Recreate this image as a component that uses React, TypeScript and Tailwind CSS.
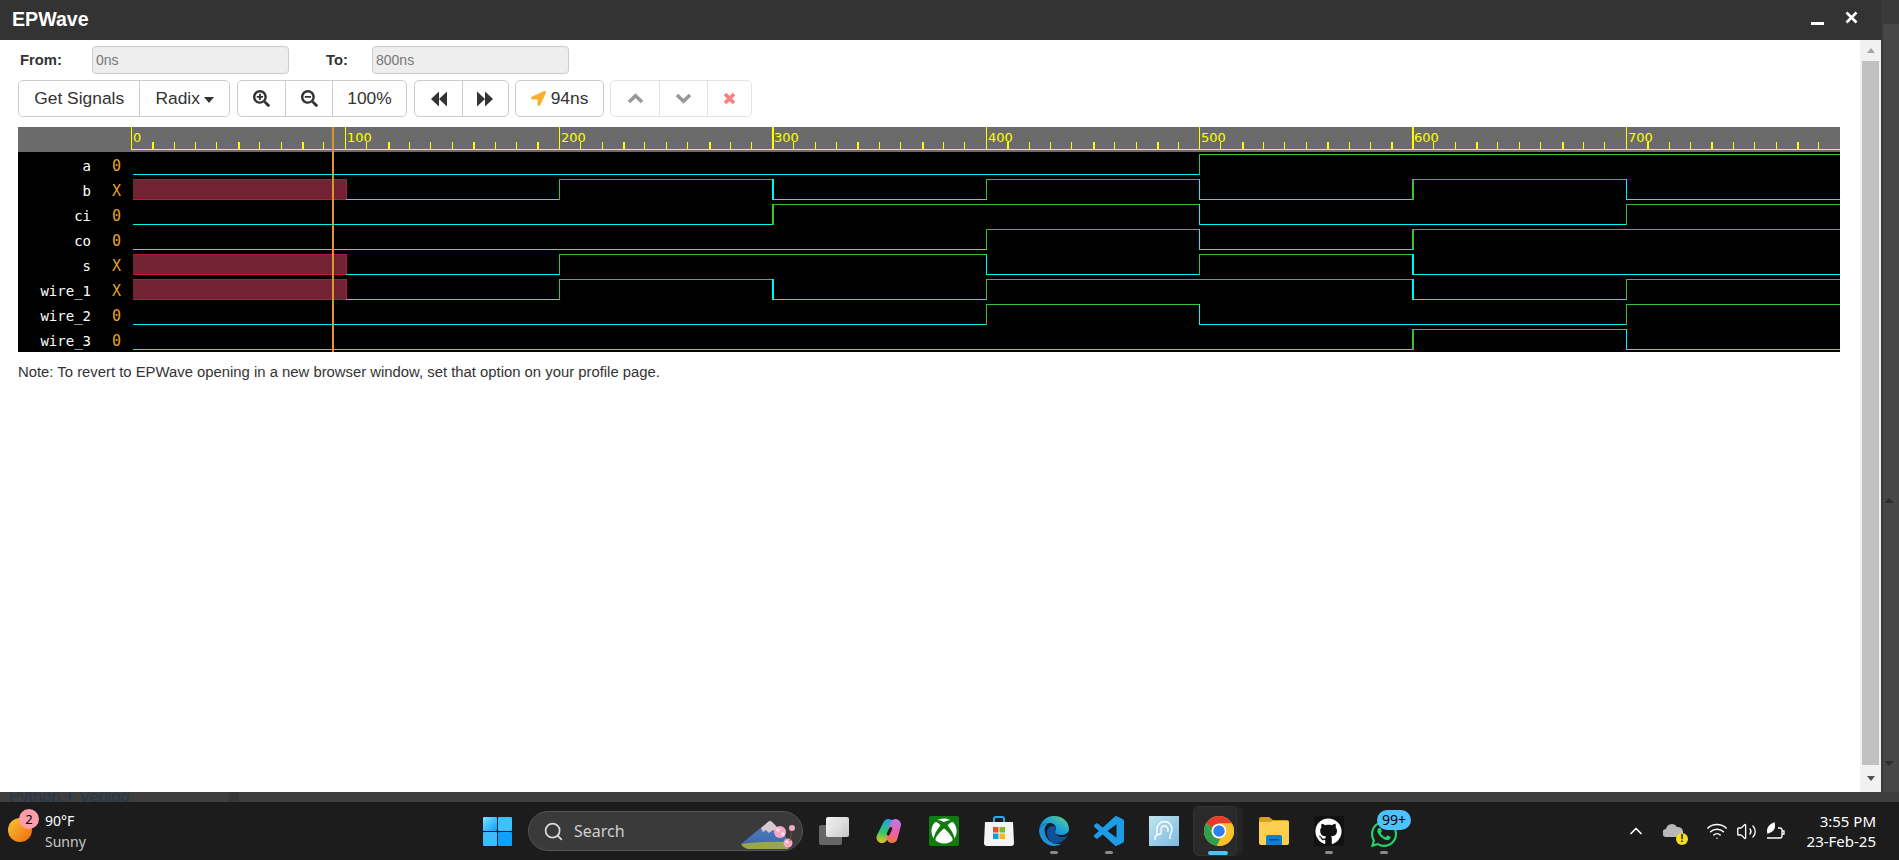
import React from "react";
import { FaSearchPlus, FaSearchMinus, FaLocationArrow, FaGithub, FaWhatsapp, FaXbox } from "react-icons/fa";
import { Search, ChevronUp, Wifi, Volume2 } from "lucide-react";

const major: Record<number, number> = { 0: 131, 100: 345, 200: 559, 300: 772, 400: 986, 500: 1199, 600: 1412, 700: 1626, 800: 1840 };
const thickMajor = [300, 600];
const thick = [10, 50, 80, 120, 160, 190, 230, 270, 340, 370, 410, 450, 480, 520, 560, 590, 630, 670, 710, 740, 780];
const OX = 131;
const OY = 127;

type Sig = { name: string; val: string; segs: [number, "0" | "1" | "x"][] };
const signals: Sig[] = [
  { name: "a", val: "0", segs: [[0, "0"], [500, "1"]] },
  { name: "b", val: "X", segs: [[0, "x"], [100, "0"], [200, "1"], [300, "0"], [400, "1"], [500, "0"], [600, "1"], [700, "0"]] },
  { name: "ci", val: "0", segs: [[0, "0"], [300, "1"], [500, "0"], [700, "1"]] },
  { name: "co", val: "0", segs: [[0, "0"], [400, "1"], [500, "0"], [600, "1"]] },
  { name: "s", val: "X", segs: [[0, "x"], [100, "0"], [200, "1"], [400, "0"], [500, "1"], [600, "0"]] },
  { name: "wire_1", val: "X", segs: [[0, "x"], [100, "0"], [200, "1"], [300, "0"], [400, "1"], [600, "0"], [700, "1"]] },
  { name: "wire_2", val: "0", segs: [[0, "0"], [400, "1"], [500, "0"], [700, "1"]] },
  { name: "wire_3", val: "0", segs: [[0, "0"], [600, "1"], [700, "0"]] },
];

const CYAN = "#00f6f6";
const GREEN = "#38c038";

function Ruler() {
  const ticks: React.ReactNode[] = [];
  for (let t = 0; t < 800; t += 10) {
    if (t % 100 === 0) continue;
    const base = major[Math.floor(t / 100) * 100];
    const x = base + Math.round((t % 100) * 2.136) - OX;
    ticks.push(<rect key={t} x={x} y={15} width={thick.includes(t) ? 2 : 1} height={7} fill="#ffff00" />);
  }
  return (
    <g shapeRendering="crispEdges">
      <rect x={0} y={0} width={1709} height={25} fill="#6b6b6b" />
      <rect x={0} y={22} width={1709} height={1} fill="#ffff00" />
      {ticks}
      {[0, 100, 200, 300, 400, 500, 600, 700].map((t) => (
        <rect key={t} x={major[t] - OX} y={0} width={thickMajor.includes(t) ? 2 : 1} height={22} fill="#ffff00" />
      ))}
    </g>
  );
}

function Wave({ sig, row }: { sig: Sig; row: number }) {
  const low = 174 + 25 * row - OY;
  const high = low - 20;
  const parts: React.ReactNode[] = [];
  sig.segs.forEach(([t, v], i) => {
    const next = i + 1 < sig.segs.length ? sig.segs[i + 1][0] : 800;
    const w = thickMajor.includes(t) ? 2 : 1;
    const xs = t === 0 ? 2 : major[t] - OX + w;
    const xe = major[next] - OX;
    if (v === "x") {
      const xr = 347 - OX;
      parts.push(<rect key={`f${i}`} x={2} y={high} width={xr - 2} height={21} fill="#722233" />);
      parts.push(<rect key={`t${i}`} x={2} y={high} width={xr - 2} height={1} fill="#a81e3e" />);
      parts.push(<rect key={`b${i}`} x={2} y={low} width={xr - 2} height={1} fill="#d0143c" />);
      parts.push(<rect key={`r${i}`} x={xr - 1} y={high} width={1} height={21} fill="#a81e3e" />);
    } else {
      parts.push(<rect key={`h${i}`} x={xs} y={v === "1" ? high : low} width={xe - xs} height={1} fill={v === "1" ? GREEN : CYAN} />);
    }
    if (t > 0 && !(sig.segs[i - 1][1] === "x")) {
      parts.push(<rect key={`v${i}`} x={major[t] - OX} y={high} width={w} height={21} fill={v === "1" ? GREEN : CYAN} />);
    }
  });
  return <g shapeRendering="crispEdges">{parts}</g>;
}

function WavePanel() {
  return (
    <div className="ml-[18px] mt-[10px] w-[1822px] h-[225px] flex bg-black">
      <div className="w-[113px] flex flex-col font-['DejaVu_Sans_Mono',monospace] text-[14px]">
        <div className="h-[25px] bg-[#6b6b6b]" />
        {signals.map((s) => (
          <div key={s.name} className="h-[25px] flex items-center pt-[3px]">
            <span className="w-[73px] text-right text-white">{s.name}</span>
            <span className="ml-[21px] text-[15px] text-[#e8a030]">{s.val}</span>
          </div>
        ))}
      </div>
      <svg width={1709} height={225} className="block">
        <Ruler />
        {[0, 100, 200, 300, 400, 500, 600, 700].map((t) => (
          <text key={t} x={major[t] - OX + 2} y={15} fill="#ffff00" fontFamily="'DejaVu Sans',sans-serif" fontSize={13}>
            {t}
          </text>
        ))}
        {signals.map((s, i) => (
          <Wave key={s.name} sig={s} row={i} />
        ))}
        <rect x={201} y={0} width={2} height={225} fill="#d9952f" shapeRendering="crispEdges" />
      </svg>
    </div>
  );
}

function Cell({ w, children, first }: { w: string; children: React.ReactNode; first?: boolean }) {
  return (
    <div className={`${w} h-full flex items-center justify-center ${first ? "" : "border-l border-[#ccc]"}`}>{children}</div>
  );
}

function Rewind({ flip }: { flip?: boolean }) {
  return (
    <svg width="16" height="16" viewBox="0 0 16 16" className={flip ? "-scale-x-100" : ""}>
      <polygon points="0,8 8,0.5 8,15.5" fill="#333" />
      <polygon points="8,8 16,0.5 16,15.5" fill="#333" />
    </svg>
  );
}

function Toolbar() {
  return (
    <div className="ml-[18px] mt-[6px] flex h-[37px] text-[17.4px] text-[#333]">
      <div className="w-[212px] flex border border-[#ccc] rounded-[5px]">
        <Cell w="w-[121px]" first>Get Signals</Cell>
        <Cell w="w-[90px]">
          <span>Radix</span>
          <span className="ml-[4px] mt-[2px] border-x-[5.5px] border-x-transparent border-t-[6px] border-t-[#333]" />
        </Cell>
      </div>
      <div className="ml-[7px] w-[170px] flex border border-[#ccc] rounded-[5px]">
        <Cell w="w-[47px]" first><FaSearchPlus size={17} /></Cell>
        <Cell w="w-[47px]"><FaSearchMinus size={17} /></Cell>
        <Cell w="w-[74px]">100%</Cell>
      </div>
      <div className="ml-[7px] w-[95px] flex border border-[#ccc] rounded-[5px]">
        <Cell w="w-[47px]" first><Rewind /></Cell>
        <Cell w="w-[46px]"><span className="-ml-[1px]"><Rewind flip /></span></Cell>
      </div>
      <div className="ml-[6px] w-[89px] flex items-center justify-center border border-[#ccc] rounded-[5px]">
        <FaLocationArrow size={15} className="text-[#fbb02d] mr-[5px]" />
        <span>94ns</span>
      </div>
      <div className="ml-[6px] w-[142px] flex border border-[#e4e4e4] rounded-[5px]">
        <div className="w-[48px] h-full flex items-center justify-center">
          <svg width="17" height="11" viewBox="0 0 17 11"><path d="M2 9 8.500 2.800 15 9" fill="none" stroke="#999" strokeWidth="3.6" /></svg>
        </div>
        <div className="w-[48px] h-full flex items-center justify-center border-l border-[#e4e4e4]">
          <svg width="17" height="11" viewBox="0 0 17 11"><path d="M2 2 8.500 8.200 15 2" fill="none" stroke="#999" strokeWidth="3.6" /></svg>
        </div>
        <div className="w-[44px] h-full flex items-center justify-center border-l border-[#e4e4e4]">
          <svg width="13" height="13" viewBox="0 0 13 13"><path d="M2 2 11 11M11 2 2 11" fill="none" stroke="#ff8080" strokeWidth="3.8" /></svg>
        </div>
      </div>
    </div>
  );
}

function FormRow() {
  const input = "h-[28px] w-[197px] bg-[#eee] border border-[#ccc] rounded-[4px] pl-[3px] flex items-center text-[14px] text-[#777]";
  return (
    <div className="flex items-center h-[28px] mt-[6px] text-[#333]">
      <span className="ml-[20px] w-[72px] font-bold text-[14.8px]">From:</span>
      <div className={input}>0ns</div>
      <span className="ml-[37px] w-[46px] font-bold text-[14.8px]">To:</span>
      <div className={input}>800ns</div>
    </div>
  );
}

function Scrollbar() {
  return (
    <div className="w-[21px] h-full bg-[#f1f1f1] flex flex-col items-center">
      <div className="h-[21px] flex items-center justify-center">
        <span className="border-x-[4.5px] border-x-transparent border-b-[5px] border-b-[#a3a3a3]" />
      </div>
      <div className="w-[17px] h-[704px] bg-[#c1c1c1]" />
      <div className="flex-1 flex items-center justify-center">
        <span className="border-x-[4.5px] border-x-transparent border-t-[5px] border-t-[#505050]" />
      </div>
    </div>
  );
}

function Window() {
  return (
    <div className="w-[1881px] h-full flex flex-col font-['Liberation_Sans',Arial,sans-serif]">
      <div className="h-[40px] bg-[#333] flex items-center text-white">
        <span className="ml-[12px] font-bold text-[19.6px] leading-none">EPWave</span>
        <div className="ml-auto mr-[23px] flex items-center">
          <span className="mt-[6px] w-[13px] h-[3px] bg-white" />
          <svg width="13" height="13" viewBox="0 0 13 13" className="ml-[21px] mb-[6px]">
            <path d="M1.5 1.5 11.5 11.5M11.5 1.5 1.5 11.5" stroke="#fff" strokeWidth="2.6" />
          </svg>
        </div>
      </div>
      <div className="flex-1 flex min-h-0 bg-white">
        <div className="flex-1">
          <FormRow />
          <Toolbar />
          <WavePanel />
          <p className="ml-[18px] mt-[12px] text-[14.85px] leading-[16px] text-[#333]">
            Note: To revert to EPWave opening in a new browser window, set that option on your profile page.
          </p>
        </div>
        <Scrollbar />
      </div>
    </div>
  );
}

function WinLogo() {
  return (
    <svg width="29" height="29" viewBox="0 0 29 29">
      <defs>
        <linearGradient id="wg" x1="0" y1="0" x2="1" y2="1">
          <stop offset="0" stopColor="#7fe4ff" />
          <stop offset="1" stopColor="#0f9bff" />
        </linearGradient>
      </defs>
      <rect x="0" y="0" width="14" height="14" rx="1" fill="url(#wg)" />
      <rect x="15" y="0" width="14" height="14" rx="1" fill="#3cc0ff" />
      <rect x="0" y="15" width="14" height="14" rx="1" fill="#3cbcff" />
      <rect x="15" y="15" width="14" height="14" rx="1" fill="#12a0ff" />
    </svg>
  );
}

function Mountain() {
  return (
    <svg width="56" height="30" viewBox="0 0 56 30">
      <defs>
        <linearGradient id="mg" x1="0" y1="0" x2="0" y2="1">
          <stop offset="0" stopColor="#5a7fc0" />
          <stop offset="1" stopColor="#3e6ab0" />
        </linearGradient>
      </defs>
      <path d="M1 25 28 3q2-2 4 0l14 14v8Z" fill="url(#mg)" />
      <path d="M21 9 28 3q2-2 4 0l8 8-4 2-3-2-4 3-3-3-3 2Z" fill="#d9c8cc" />
      <path d="M1 25q20-3 50-2l-3 7H8Q3 29 1 25Z" fill="#9aa84a" />
      <g fill="#f8a8c4">
        <circle cx="40" cy="13" r="6" />
        <circle cx="48" cy="24" r="4.5" />
        <circle cx="52" cy="9" r="3" />
      </g>
      <g fill="#fde2ec">
        <circle cx="38" cy="11" r="1.8" />
        <circle cx="43" cy="15" r="1.8" />
        <circle cx="47" cy="23" r="1.4" />
      </g>
      <path d="M52 12 50 22" stroke="#7a4a3a" strokeWidth="1" />
    </svg>
  );
}

function TaskView() {
  return (
    <div className="relative w-[30px] h-[28px]">
      <div className="absolute left-0 bottom-0 w-[23px] h-[20px] rounded-[2px] bg-[#666]" />
      <div className="absolute right-0 top-0 w-[23px] h-[20px] rounded-[2px] bg-gradient-to-br from-white to-[#cfcfcf] opacity-95" />
    </div>
  );
}

function Copilot() {
  return (
    <svg width="28" height="28" viewBox="0 0 28 28" fill="none" strokeLinecap="round">
      <defs>
        <linearGradient id="c1" gradientUnits="userSpaceOnUse" x1="12" y1="1" x2="8" y2="27">
          <stop offset="0" stopColor="#1c9ff5" />
          <stop offset=".55" stopColor="#35c46e" />
          <stop offset="1" stopColor="#f2c515" />
        </linearGradient>
        <linearGradient id="c2" gradientUnits="userSpaceOnUse" x1="22" y1="1" x2="14" y2="27">
          <stop offset="0" stopColor="#b57cf0" />
          <stop offset=".55" stopColor="#ec5fa6" />
          <stop offset="1" stopColor="#f87b2a" />
        </linearGradient>
      </defs>
      <path d="M13.500 7.500 7 20.500" stroke="url(#c1)" strokeWidth="11" />
      <path d="M20.500 7.500 17 20.500" stroke="url(#c2)" strokeWidth="11" />
      <path d="M15.800 11.500 13.200 17" stroke="#1c1c1c" strokeWidth="3" />
    </svg>
  );
}

function Store() {
  return (
    <svg width="30" height="30" viewBox="0 0 30 30">
      <path d="M10 7V3q0-2 2-2h6q2 0 2 2v4" fill="none" stroke="#29a8ea" strokeWidth="2" />
      <path d="M1 6h28l1 21q0 3-3 3H3q-3 0-3-3Z" fill="#f4f4f4" />
      <rect x="9" y="11" width="5.5" height="5.5" fill="#e8502a" />
      <rect x="15.5" y="11" width="5.5" height="5.5" fill="#7fba26" />
      <rect x="9" y="17.5" width="5.5" height="5.5" fill="#0fa0e8" />
      <rect x="15.5" y="17.5" width="5.5" height="5.5" fill="#fdb813" />
    </svg>
  );
}

function Edge() {
  return (
    <svg width="30" height="30" viewBox="0 0 30 30">
      <defs>
        <linearGradient id="e1" x1="0" y1="1" x2="1" y2="0">
          <stop offset="0" stopColor="#0c6bc0" />
          <stop offset=".55" stopColor="#1fa6d8" />
          <stop offset="1" stopColor="#6edb6a" />
        </linearGradient>
      </defs>
      <path d="M15 0c9 0 15 6 15 13 0 4-4 6-8 6-4 0-6-1-6-3 0-1 1-2 1-4 0-3-3-5-7-5-5 0-9 4-10 7C1 6 7 0 15 0Z" fill="url(#e1)" />
      <path d="M0 14c1-3 5-7 10-7-4 2-5 6-4 10 1 6 6 11 14 11 2 0 3 0 4-1-3 2-6 3-9 3C7 30 0 23 0 14Z" fill="#1f8fd8" />
      <path d="M8 16c0-3 2-6 6-6 2 0 3 1 3 2 0 1-1 2-1 4 0 3 4 5 8 5 2 0 4-1 5-2-2 4-6 8-11 8-6 1-10-5-10-11Z" fill="#0e4f9a" />
    </svg>
  );
}

function VSCode() {
  return (
    <svg width="30" height="30" viewBox="0 0 24 24">
      <path
        d="M23.15 2.587L18.21.21a1.494 1.494 0 0 0-1.705.29l-9.46 8.63-4.12-3.128a.999.999 0 0 0-1.276.057L.327 7.261A1 1 0 0 0 .326 8.74L3.899 12 .326 15.26a1 1 0 0 0 .001 1.479L1.65 17.94a.999.999 0 0 0 1.276.057l4.12-3.128 9.46 8.63a1.492 1.492 0 0 0 1.704.29l4.942-2.377A1.5 1.5 0 0 0 24 20.06V3.939a1.5 1.5 0 0 0-.85-1.352zm-5.146 14.861L10.826 12l7.178-5.448v10.896z"
        fill="#1f9ce8"
      />
    </svg>
  );
}

function HeadTile() {
  return (
    <div className="w-[30px] h-[30px] bg-gradient-to-br from-[#bfe6ee] to-[#7fb8e0] flex items-center justify-center">
      <svg width="22" height="22" viewBox="0 0 22 22" fill="none" stroke="#fff" strokeWidth="1.3">
        <path d="M4 14V9a7.5 7.5 0 0 1 15 0c0 4-2 5-2 7v3" />
        <path d="M8 14V9.5a3.5 3.5 0 0 1 7 0V12" />
        <path d="M8 14c-2 0-5 1-6 3v3" />
      </svg>
    </div>
  );
}

function Chrome() {
  const p = "M1.61 6A12 12 0 0 1 22.39 6H12A6 6 0 0 0 6.8 9Z";
  return (
    <svg width="30" height="30" viewBox="0 0 24 24">
      <circle cx="12" cy="12" r="12" fill="#fbc02d" />
      <path d="M1.61 6 6.8 15A6 6 0 0 0 13 18L10.2 23.9A12 12 0 0 1 1.61 6Z" fill="#2e9e4f" />
      <path d={p} fill="#e53a2f" />
      <path d="M22.39 6A12 12 0 0 1 10.4 23.9L15.5 15A6 6 0 0 0 12 6Z" fill="#fbc02d" />
      <path d="M1.61 6 6.8 15A6 6 0 0 1 6.8 9Z" fill="#2e9e4f" />
      <circle cx="12" cy="12" r="5.8" fill="#fff" />
      <circle cx="12" cy="12" r="4.6" fill="#2f7ff0" />
    </svg>
  );
}

function Folder() {
  return (
    <svg width="30" height="28" viewBox="0 0 30 28">
      <path d="M0 2q0-2 2-2h8l4 3h14q2 0 2 2v4H0Z" fill="#d9a20f" />
      <path d="M0 5h11l3-1h14q2 0 2 2v20q0 2-2 2H2q-2 0-2-2Z" fill="#fcd04f" />
      <path d="M7 20q0-2 2-2h12q2 0 2 2v8H7Z" fill="#0f7fd0" />
      <rect x="10" y="22" width="10" height="1.5" fill="#0a4f8a" />
    </svg>
  );
}

function Dot({ className }: { className: string }) {
  return <span className={`absolute bottom-[6px] left-1/2 -translate-x-1/2 rounded-full ${className}`} />;
}

function Slot({ children, dot }: { children: React.ReactNode; dot?: boolean }) {
  return (
    <div className="relative w-[55px] h-full flex items-center justify-center">
      {children}
      {dot && <Dot className="w-[8px] h-[3px] bg-[#8a8a8a]" />}
    </div>
  );
}

function Tray() {
  return (
    <div className="ml-auto pr-[23px] flex items-center h-full text-white">
      <ChevronUp size={20} strokeWidth={2} />
      <div className="relative ml-[17px] w-[22px] h-[20px]">
        <svg width="20" height="14" viewBox="0 0 20 14" className="mt-[2px]">
          <path d="M4 14a4 4 0 0 1-1-8 6 6 0 0 1 11-2 4.500 4.500 0 0 1 2 10Z" fill="#b8b8b8" />
        </svg>
        <span className="absolute right-[-3px] bottom-[-4px] w-[12px] h-[12px] rounded-full bg-[#f5e01f] text-black text-[10px] leading-[12px] text-center font-bold font-['Liberation_Sans',sans-serif]">!</span>
      </div>
      <Wifi size={22} strokeWidth={1.6} className="ml-[21px]" />
      <Volume2 size={21} strokeWidth={1.5} className="ml-[8px]" />
      <svg width="20" height="20" viewBox="0 0 20 20" fill="none" stroke="#fff" strokeWidth="1.3" className="ml-[9px]">
        <path d="M1 17h13q2 0 2-2V9q0-2-2-2h-2" />
        <path d="M16 10h2v3h-2" />
        <path d="M2 12c-1-4 1-8 6-10 1 4 0 8-4 9Z" fill="#fff" />
      </svg>
      <div className="w-[90px] text-right text-[15px] leading-[20px] font-['Noto_Sans',sans-serif]">
        <div>3:55 PM</div>
        <div>23-Feb-25</div>
      </div>
    </div>
  );
}

function Taskbar() {
  return (
    <div className="h-[58px] bg-[#1c1c1c] flex items-center text-white font-['Noto_Sans',sans-serif]">
      <div className="w-[470px] h-full flex items-center pl-[8px]">
        <div className="relative w-[37px] h-[40px]">
          <div className="absolute left-0 top-[7px] w-[24px] h-[24px] rounded-full bg-gradient-to-br from-[#f4c72f] to-[#ee6410]" />
          <div className="absolute left-[11px] top-[-2px] w-[20px] h-[20px] rounded-full bg-[#ff9dad] text-black text-[13px] leading-[20px] text-center">2</div>
        </div>
        <div className="flex flex-col text-[14px] leading-[21px]">
          <span>90°F</span>
          <span className="text-[#c8c8c8]">Sunny</span>
        </div>
      </div>
      <Slot><WinLogo /></Slot>
      <div className="ml-[3px] w-[275px] h-[40px] rounded-full bg-[#3a3a3a] border border-[#555] flex items-center pl-[14px] overflow-hidden">
        <Search size={21} strokeWidth={2} className="text-[#d8d8d8]" />
        <span className="ml-[10px] text-[16px] text-[#cfcfcf]">Search</span>
        <div className="ml-auto mr-[6px] mt-[6px]"><Mountain /></div>
      </div>
      <div className="ml-[3px] flex h-full">
        <Slot><TaskView /></Slot>
        <Slot><Copilot /></Slot>
        <Slot><div className="w-[30px] h-[30px] rounded-[2px] bg-[#107c10] flex items-center justify-center"><FaXbox size={26} className="text-white" /></div></Slot>
        <Slot><Store /></Slot>
        <Slot dot><Edge /></Slot>
        <Slot dot><VSCode /></Slot>
        <Slot><HeadTile /></Slot>
        <Slot>
          <div className="absolute left-[7px] top-[4px] w-[45px] h-[50px] rounded-[6px] bg-[#242424]" />
          <div className="absolute left-[2px] top-[4px] w-[44px] h-[50px] rounded-[6px] bg-[#2a2a2a] border border-[#333]" />
          <div className="relative"><Chrome /></div>
          <span className="absolute bottom-[5px] left-[17px] w-[20px] h-[4px] rounded-full bg-[#4cc2ff]" />
        </Slot>
        <Slot><Folder /></Slot>
        <Slot dot><div className="w-[30px] h-[30px] bg-[#111] flex items-center justify-center"><FaGithub size={27} className="text-white" /></div></Slot>
        <Slot dot>
          <FaWhatsapp size={30} className="text-[#25d366] mt-[6px]" />
          <span className="absolute left-[21px] top-[8px] w-[34px] h-[20px] rounded-full bg-[#4cc2ff] text-black text-[14px] leading-[20px] text-center">99+</span>
        </Slot>
      </div>
      <Tray />
    </div>
  );
}

export default function App() {
  return (
    <div className="w-[1899px] h-[860px] flex flex-col overflow-hidden bg-[#444]">
      <div className="h-[792px] flex">
        <Window />
        <div className="flex-1 flex flex-col bg-[#474747] border-l-2 border-[#3a3a3a]">
          <div className="h-[25px] bg-[#3a3a3a] border-b border-[#4a4a4a]" />
          <div className="flex-1 flex flex-col items-start pl-[1px]">
            <span className="mt-[473px] border-x-[5px] border-x-transparent border-b-[5px] border-b-[#2e2e2e]" />
            <span className="mt-[258px] border-x-[5px] border-x-transparent border-t-[5px] border-t-[#2e2e2e]" />
          </div>
        </div>
      </div>
      <div className="h-[10px] bg-[#3e3e3e] overflow-hidden flex font-['Liberation_Sans',sans-serif]">
        <span className="ml-[9px] -mt-[5px] text-[16.5px] leading-[18px] text-[#24384f] w-[220px] h-[18px]">Python + Verilog</span>
        <span className="w-[10px] h-full bg-[#363636]" />
      </div>
      <Taskbar />
    </div>
  );
}
